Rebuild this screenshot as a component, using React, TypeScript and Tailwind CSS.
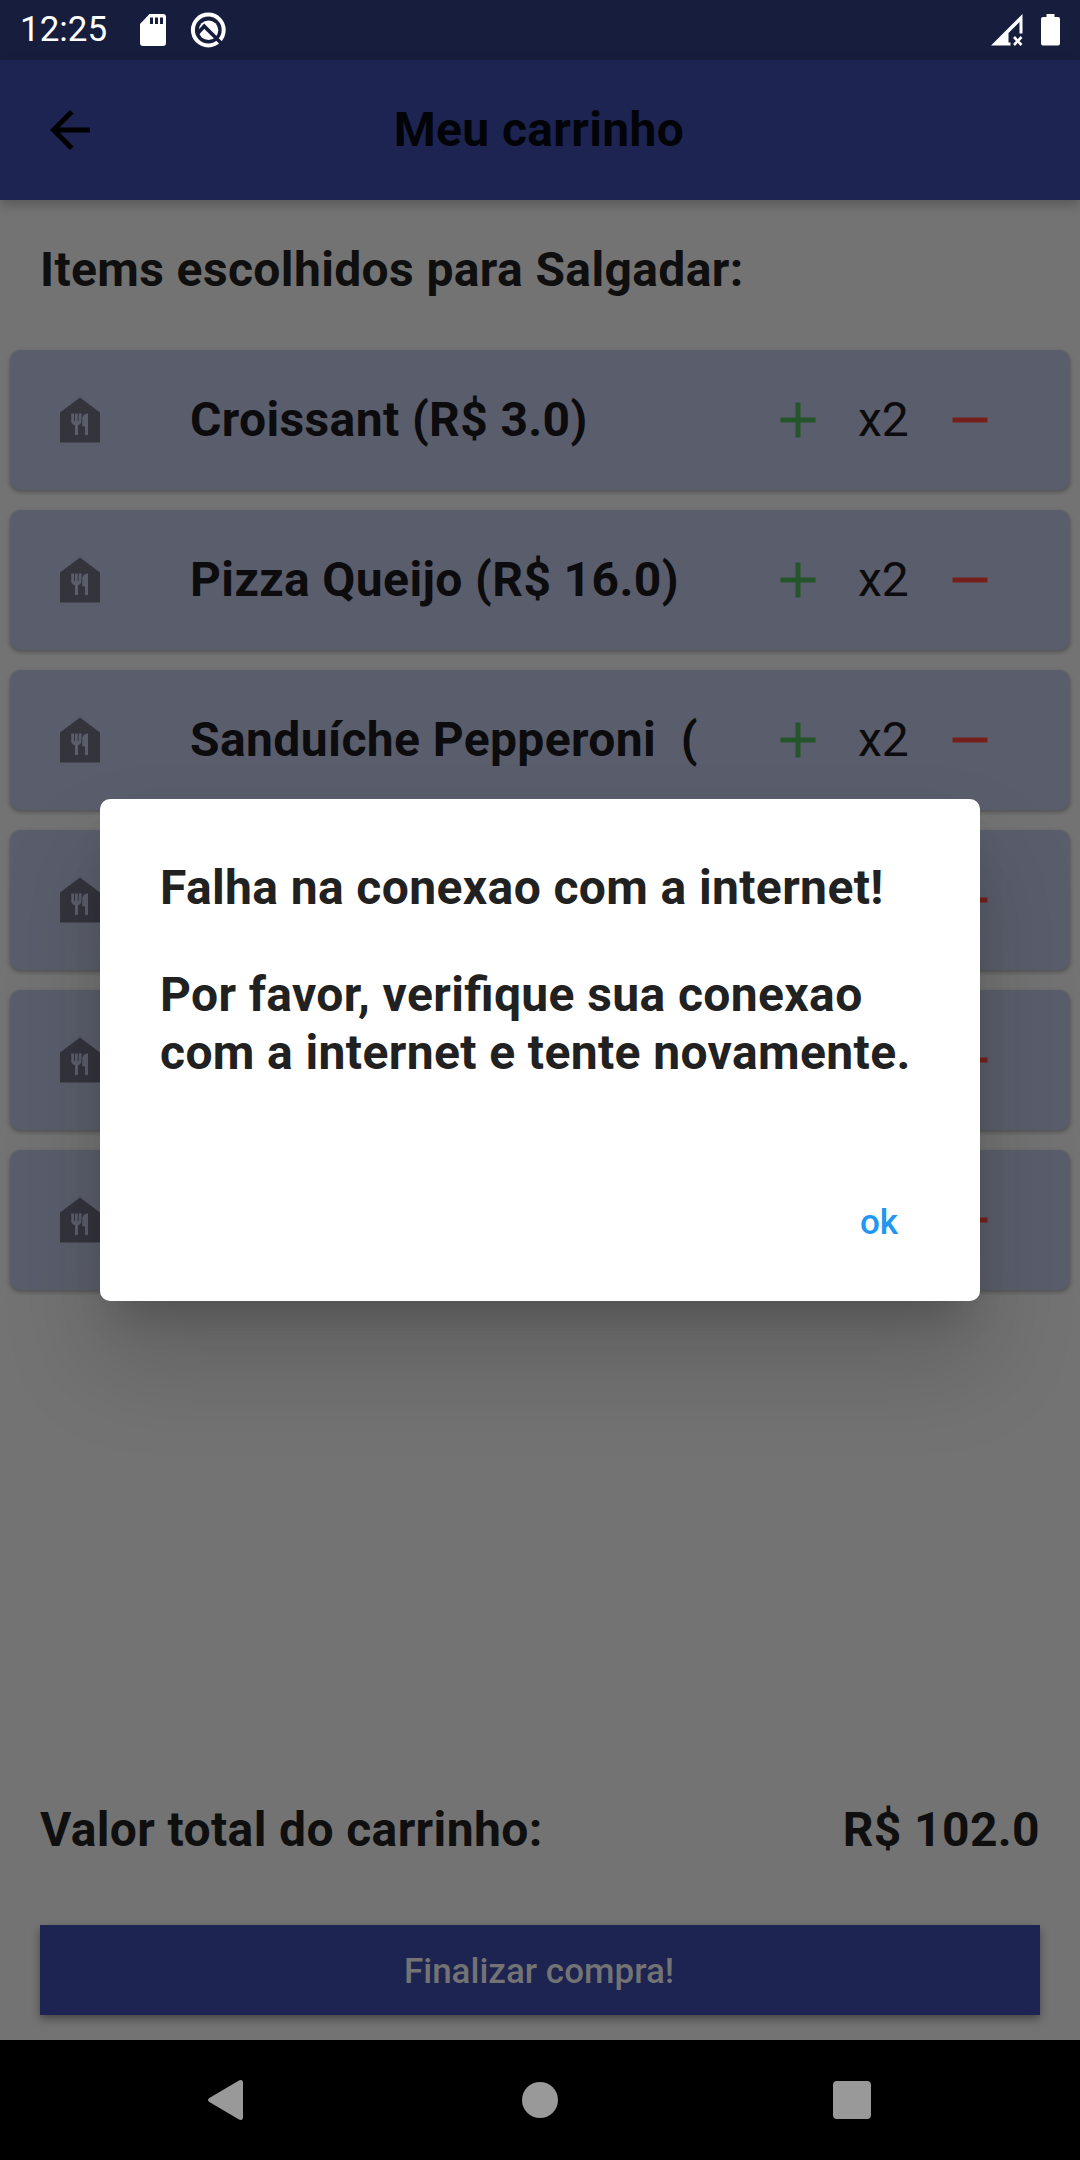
import { MdAdd, MdArrowBack, MdRemove } from "react-icons/md";

type Item = { name?: string; qty?: number };

const items: Item[] = [
  { name: "Croissant (R$ 3.0)", qty: 2 },
  { name: "Pizza Queijo (R$ 16.0)", qty: 2 },
  { name: "Sanduíche Pepperoni\u00a0\u00a0(", qty: 2 },
  {},
  {},
  {},
];

function StatusBar() {
  return (
    <div className="flex h-[60px] shrink-0 items-center justify-between bg-[#171d3d] pr-5 pl-5 text-white">
      <div className="flex items-center">
        <span className="w-[88px] text-[35px] leading-[60px] whitespace-nowrap">12:25</span>
        <svg className="ml-8 h-8 w-[26px]" viewBox="0 0 26 32" fill="none">
          <path d="M9.5 0H23a3 3 0 0 1 3 3v26a3 3 0 0 1-3 3H3a3 3 0 0 1-3-3V10z" fill="#fff" />
          <path d="M10 3.500h3v6.500h-3zM15 3.500h3v6.500h-3zM20 3.500h3v6.500h-3z" fill="#171d3d" />
        </svg>
        <svg className="ml-[24px] h-9 w-9" viewBox="0 0 36 36" fill="none">
          <circle cx="18.3" cy="18" r="15.4" stroke="#fff" strokeWidth="4" />
          <circle cx="18.5" cy="18.3" r="9.800" fill="#fff" />
          <path d="M8 21 14.200 14.200 33 33" stroke="#171d3d" strokeWidth="3.600" />
        </svg>
      </div>
      <div className="flex items-center">
        <svg className="h-8 w-8" viewBox="0 0 32 32" fill="none">
          <path d="M0 31.5 31.5 0v19.5h-3V8L17.5 19v9.500h2v3z" fill="#fff" />
          <path d="m23 23 7.500 8M30.500 23 23 31" stroke="#fff" strokeWidth="2.600" />
        </svg>
        <svg className="ml-[18px] h-8 w-[19px]" viewBox="0 0 19 32" fill="#fff">
          <path d="M5.500 0h8v3H17a2 2 0 0 1 2 2v24.500a2 2 0 0 1-2 2H2a2 2 0 0 1-2-2V5a2 2 0 0 1 2-2h3.500z" />
        </svg>
      </div>
    </div>
  );
}

function AppBar() {
  return (
    <header className="relative z-10 grid h-[140px] shrink-0 grid-cols-[100px_1fr_100px] items-center bg-[#1d2451] px-10 text-black shadow-[0_5px_10px_rgba(0,0,0,0.22)]">
      <MdArrowBack className="size-[60px]" />
      <h1 className="pr-[2px] text-center text-[48px] leading-[60px] font-bold tracking-[0.375px] text-[#030408]">Meu carrinho</h1>
    </header>
  );
}

function FoodBankIcon() {
  return (
    <svg className="size-[60px] shrink-0" viewBox="0 0 24 24">
      <path d="M12 3 4 9v12h16V9z" fill="#33343c" />
      <path
        d="M12.500 12.500c0 .83-.5 1.500-1.300 1.600V18H10v-3.900c-.8-.1-1.500-.77-1.500-1.600V9.400h1.100v3h.4v-3h1.100v3h.4v-3h1.200zM15.200 18H14v-3.500h-1.100v-3c0-1.200 1-2.100 2.300-2.100z"
        fill="#5a5d6b"
      />
    </svg>
  );
}

function CartRow({ name, qty }: Item) {
  return (
    <li className="flex h-[140px] items-center rounded-[10px] bg-[#5a5d6b] pl-10 shadow-[0_2px_4px_rgba(0,0,0,0.3)]">
      <FoodBankIcon />
      <span className="ml-20 w-[520px] shrink-0 text-[48px] leading-[60px] font-bold tracking-[0.375px] whitespace-nowrap text-[#0c0c0e]">
        {name}
      </span>
      <MdAdd className="ml-[57.5px] size-[60px] shrink-0 text-[#24562a]" />
      <span className="ml-[30.5px] w-[50px] shrink-0 text-[48px] leading-[60px] text-[#0c0c0e]">{qty && `x${qty}`}</span>
      <MdRemove className="ml-[32px] size-[60px] shrink-0 text-[#75201b]" />
    </li>
  );
}

function Dialog() {
  return (
    <div className="absolute inset-0 z-20 flex justify-center pt-[798.5px]">
      <div className="flex h-[502.5px] w-[880px] flex-col rounded-[10px] bg-white px-[60px] pt-[60.5px] text-[48px] leading-[58px] font-bold tracking-[0.375px] text-[#212121] shadow-[0_60px_95px_7px_rgba(0,0,0,0.15),0_27px_37px_-17px_rgba(0,0,0,0.18)] [font-feature-settings:'liga']">
        <p className="whitespace-nowrap">Falha na conexao com a internet!</p>
        <p className="mt-[49px] whitespace-nowrap">
          Por favor, verifique sua conexao
          <br />
          com a internet e tente novamente.
        </p>
        <button className="mt-[111px] mr-[22px] self-end text-[35px] leading-[60px] font-medium tracking-normal text-[#2196f3]">ok</button>
      </div>
    </div>
  );
}

function NavBar() {
  return (
    <nav className="flex h-[120px] shrink-0 items-center justify-between bg-black pr-[209px] pl-[208px]">
      <svg className="h-10 w-[35px]" viewBox="0 0 35 40" fill="#999">
        <path d="M1.300 18 31 .4Q35-1 35 3v34q0 4-4 2.600L1.300 22q-2.600-2 0-4z" />
      </svg>
      <div className="ml-[4px] size-[36px] rounded-full bg-[#999]" />
      <div className="size-[38px] rounded-[4px] bg-[#999]" />
    </nav>
  );
}

export default function App() {
  return (
    <div className="relative flex h-[2160px] w-[1080px] flex-col overflow-hidden bg-[#737373] font-['Roboto',sans-serif]">
      <StatusBar />
      <AppBar />
      <main className="flex flex-1 flex-col">
        <h2 className="mt-10 px-10 text-[48px] leading-[60px] font-bold tracking-[0.375px] text-[#0f0f0f]">Items escolhidos para Salgadar:</h2>
        <ul className="mt-[50px] flex flex-col gap-5 px-[10px]">
          {items.map((item, i) => (
            <CartRow key={i} {...item} />
          ))}
        </ul>
        <div className="mt-auto flex justify-between px-10 text-[48px] leading-[60px] font-bold tracking-[0.375px] text-[#0f0f0f]">
          <span>Valor total do carrinho:</span>
          <span>R$ 102.0</span>
        </div>
        <button className="mx-10 mt-[65px] mb-[25px] h-[90px] bg-[#1d2451] pt-[3px] pr-[2px] text-[35px] leading-[60px] font-medium text-[#737373] shadow-[0_4px_8px_rgba(0,0,0,0.38)]">
          Finalizar compra!
        </button>
      </main>
      <NavBar />
      <Dialog />
    </div>
  );
}
